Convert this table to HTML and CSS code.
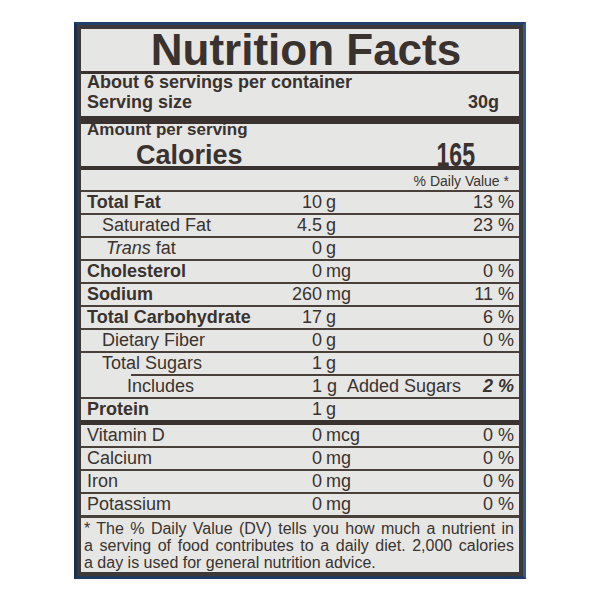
FILE: index.html
```html
<!DOCTYPE html>
<html lang="en">
<head>
<meta charset="utf-8">
<title>Nutrition Facts</title>
<link rel="stylesheet" href="styles.css">
</head>
<body>
<div class="label">
  <div class="inner">
    <h1 class="title">Nutrition Facts</h1>
    <div class="servings">
      <div class="line1">About 6 servings per container</div>
      <div class="size"><span>Serving size</span><span>30g</span></div>
    </div>
    <div class="amount">Amount per serving</div>
    <div class="calories"><span>Calories</span><span class="cal-val">165</span></div>
    <div class="dv">% Daily Value *</div>

    <div class="row bold"><span class="name">Total Fat</span><span class="num">10</span><span class="unit">g</span><span class="pct">13 %</span></div>
    <div class="row sub"><span class="name">Saturated Fat</span><span class="num">4.5</span><span class="unit">g</span><span class="pct">23 %</span></div>
    <div class="row trans"><span class="name"><i>Trans</i> fat</span><span class="num">0</span><span class="unit">g</span><span class="pct"></span></div>
    <div class="row bold"><span class="name">Cholesterol</span><span class="num">0</span><span class="unit">mg</span><span class="pct">0 %</span></div>
    <div class="row bold"><span class="name">Sodium</span><span class="num">260</span><span class="unit">mg</span><span class="pct">11 %</span></div>
    <div class="row bold"><span class="name">Total Carbohydrate</span><span class="num">17</span><span class="unit">g</span><span class="pct">6 %</span></div>
    <div class="row sub"><span class="name">Dietary Fiber</span><span class="num">0</span><span class="unit">g</span><span class="pct">0 %</span></div>
    <div class="row sub sugars"><span class="name">Total Sugars</span><span class="num">1</span><span class="unit">g</span><span class="pct"></span></div>
    <div class="row incl"><span class="name">Includes</span><span class="num">1</span><span class="unit">g<span class="added">Added Sugars</span></span><span class="pct strong">2 %</span></div>
    <div class="row bold protein"><span class="name">Protein</span><span class="num">1</span><span class="unit">g</span><span class="pct"></span></div>

    <div class="row"><span class="name">Vitamin D</span><span class="num">0</span><span class="unit">mcg</span><span class="pct">0 %</span></div>
    <div class="row"><span class="name">Calcium</span><span class="num">0</span><span class="unit">mg</span><span class="pct">0 %</span></div>
    <div class="row"><span class="name">Iron</span><span class="num">0</span><span class="unit">mg</span><span class="pct">0 %</span></div>
    <div class="row last"><span class="name">Potassium</span><span class="num">0</span><span class="unit">mg</span><span class="pct">0 %</span></div>

    <div class="foot">
      <span class="fl">* The % Daily Value (DV) tells you how much a nutrient in</span>
      <span class="fl">a serving of food contributes to a daily diet. 2,000 calories</span>
      <span class="fe">a day is used for general nutrition advice.</span>
    </div>
  </div>
</div>
</body>
</html>
```
FILE: styles.css
```css
html, body {
  margin: 0;
  padding: 0;
  background: #ffffff;
}

.label {
  width: 452px;
  box-sizing: border-box;
  margin: 22px auto 0;
  border-style: solid;
  border-width: 3px;
  border-color: #22406a #2e5c92 #1f3a60 #1b304f;
}

.inner {
  border: 4px solid #3d3938;
  background: #e6e7e5;
  color: #3a322e;
  font-family: "Liberation Sans", Arial, Helvetica, sans-serif;
}

.title {
  margin: 0;
  font-size: 44px;
  line-height: 42px;
  font-weight: bold;
  text-align: center;
  padding-left: 12px;
  border-bottom: 3px solid #3a322e;
}

.servings {
  font-size: 18px;
  font-weight: bold;
  padding: 0 6px 1.5px;
  border-bottom: 8px solid #3a322e;
}

.line1 {
  line-height: 17px;
}

.size {
  display: flex;
  justify-content: space-between;
  line-height: 23.5px;
  padding-right: 14px;
}

.amount {
  font-size: 17px;
  font-weight: bold;
  line-height: 12px;
  padding: 0 6px;
}

.calories {
  display: flex;
  justify-content: space-between;
  align-items: flex-end;
  font-size: 27px;
  font-weight: bold;
  line-height: 21px;
  padding: 8px 44px 0 55px;
  border-bottom: 4px solid #3a322e;
}

.cal-val {
  display: inline-block;
  font-size: 33px;
  line-height: 21px;
  transform: scaleX(0.7);
  transform-origin: right center;
  margin-bottom: 1px;
}

.dv {
  font-size: 14px;
  line-height: 17px;
  text-align: right;
  padding: 3px 10px 0 0;
  border-bottom: 2px solid #4a403a;
}

.row {
  display: grid;
  grid-template-columns: 200px 41px 1fr auto;
  font-size: 18px;
  line-height: 21px;
  border-bottom: 2px solid #4a403a;
}

.row.bold {
  font-weight: bold;
}

.row.bold .num,
.row.bold .unit,
.row.bold .pct {
  font-weight: normal;
}

.name {
  padding-left: 6px;
  white-space: nowrap;
}

.sub .name {
  padding-left: 21px;
}

.trans .name {
  padding-left: 25px;
}

.incl .name {
  padding-left: 46px;
}

.num {
  text-align: right;
}

.unit {
  padding-left: 4px;
  white-space: nowrap;
}

.incl .unit {
  padding-left: 5px;
}

.added {
  padding-left: 10px;
}

.pct {
  text-align: right;
  padding-right: 5px;
  white-space: nowrap;
}

.pct.strong {
  font-weight: bold;
  font-style: italic;
}

.row.sugars {
  border-bottom: 0;
  padding-bottom: 2px;
  background: linear-gradient(#4a403a, #4a403a) no-repeat right bottom / calc(100% - 50px) 2px;
}

.row.protein {
  border-bottom-width: 5px;
  border-bottom-color: #3a322e;
}

.row.last {
  border-bottom-width: 3px;
}

.foot {
  font-size: 16px;
  line-height: 17px;
  padding: 2px 5px 1px 3px;
}

.fl {
  display: block;
  text-align: justify;
  text-align-last: justify;
  white-space: nowrap;
}

.fe {
  display: block;
}
```
